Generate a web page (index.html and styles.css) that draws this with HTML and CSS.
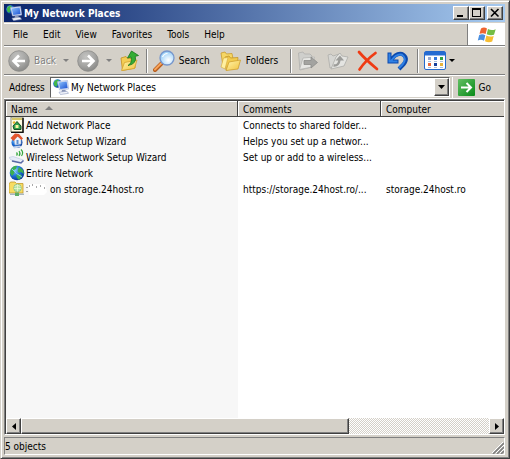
FILE: index.html
```html
<!DOCTYPE html>
<html lang="en">
<head>
<meta charset="utf-8">
<title>My Network Places</title>
<link rel="stylesheet" href="styles.css">
</head>
<body>
<svg class="defs" aria-hidden="true">
  <defs>
    <radialGradient id="disc" cx=".4" cy=".3" r=".75"><stop offset="0" stop-color="#c4c4c2"/><stop offset=".6" stop-color="#a4a4a2"/><stop offset="1" stop-color="#858583"/></radialGradient>
    <radialGradient id="globe" cx=".35" cy=".3" r=".8"><stop offset="0" stop-color="#8fd0ff"/><stop offset=".5" stop-color="#1c6fd8"/><stop offset="1" stop-color="#062c86"/></radialGradient>
    <linearGradient id="folder" x1="0" y1="0" x2="1" y2="1"><stop offset="0" stop-color="#fff6b0"/><stop offset="1" stop-color="#f2c23c"/></linearGradient>
    <linearGradient id="screen" x1="0" y1="0" x2="1" y2="1"><stop offset="0" stop-color="#8fc4ff"/><stop offset="1" stop-color="#1a4fd0"/></linearGradient>
    <radialGradient id="lens" cx=".6" cy=".65" r=".7"><stop offset="0" stop-color="#ffffff"/><stop offset="1" stop-color="#8ccaf8"/></radialGradient>
    <linearGradient id="green" x1="0" y1="0" x2="1" y2="1"><stop offset="0" stop-color="#63bf63"/><stop offset="1" stop-color="#078a18"/></linearGradient>
  </defs>
  <symbol id="network" viewBox="0 0 16 16">
    <circle cx="4.5" cy="4.5" r="4.3" fill="url(#globe)"/>
    <path d="M1 3Q2 .6 5 .5L6 2 4 4 4.500 6 3 8 1 6Z" fill="#43b649"/>
    <path d="M4.500 2.500 14.500 1.500 15.700 10 6.500 11Z" fill="#dfe7f8" stroke="#a3b0d6" stroke-width=".6"/>
    <path d="M5.600 3.500 13.600 2.600 14.600 9 7.300 9.900Z" fill="url(#screen)"/>
    <path d="M9 11H12.500L13 13H8.500Z" fill="#8a96b5"/>
    <path d="M6 13.200 14 12.300 15.500 14.300 7.500 15.500Z" fill="#f2f5fb" stroke="#8f9bc0" stroke-width=".6"/>
  </symbol>
</svg>
<div class="window">
  <header class="titlebar">
    <svg class="icon16"><use href="#network"/></svg>
    <h1>My Network Places</h1>
    <button class="caption" aria-label="Minimize"><svg viewBox="0 0 12 10"><path d="M2 7H8V9H2Z"/></svg></button>
    <button class="caption" aria-label="Maximize"><svg viewBox="0 0 12 10"><path fill-rule="evenodd" d="M1 0H10V9H1ZM2 2V8H9V2Z"/></svg></button>
    <button class="caption close" aria-label="Close"><svg viewBox="0 0 12 10"><path d="M2 1 9.500 8.500M9.500 1 2 8.500" stroke="#000" stroke-width="1.600"/></svg></button>
  </header>

  <div class="menurow">
    <nav class="menu">
      <button>File</button><button>Edit</button><button>View</button><button>Favorites</button><button>Tools</button><button>Help</button>
    </nav>
    <div class="flag">
      <svg viewBox="0 0 20 18">
        <path d="M4 2.500Q7 .5 10 2.500L8.600 8Q6 6.400 2.500 7.800Z" fill="#ee6430"/>
        <path d="M11 3Q14.500 5 18.700 3.200L17 8.800Q13.500 10 9.700 8.300Z" fill="#74bd45"/>
        <path d="M2.200 9Q5.500 7.500 8.300 9.200L7 14.700Q4 13 .8 14.400Z" fill="#4a8fe0"/>
        <path d="M9.400 9.600Q12.800 11.300 16.700 9.900L15.200 15.600Q11.500 17 8 15.200Z" fill="#f7bd32"/>
      </svg>
    </div>
  </div>

  <div class="toolbar">
    <button class="tool off" disabled><svg class="icon22" viewBox="0 0 22 22"><circle cx="11" cy="11" r="10.300" fill="url(#disc)" stroke="#8b8b89" stroke-width=".8"/><path d="M17 11H6M11 5.500 5.500 11 11 16.500" fill="none" stroke="#fff" stroke-width="2.600"/></svg><span>Back</span></button>
    <button class="drop off" disabled aria-label="Back history"></button>
    <button class="tool off" disabled aria-label="Forward"><svg class="icon22" viewBox="0 0 22 22"><circle cx="11" cy="11" r="10.300" fill="url(#disc)" stroke="#8b8b89" stroke-width=".8"/><path d="M5 11H16M11 5.500 16.500 11 11 16.500" fill="none" stroke="#fff" stroke-width="2.600"/></svg></button>
    <button class="drop off" disabled aria-label="Forward history"></button>
    <button class="tool last" aria-label="Up"><svg class="icon22" viewBox="0 0 22 22"><path d="M1 8 6 6.500 7.500 8.500 15 8V18L2.500 20.500Z" fill="#f3cd55" stroke="#c3911f" stroke-width=".8"/><path d="M1.500 20.500 4.500 12.500 17 10 14.500 18.500Z" fill="url(#folder)" stroke="#d3a22d" stroke-width=".8"/><path d="M8 15.500Q12.500 13 11 7L7.500 8 11.500 1 18.500 5.500 15.300 6.300Q17 14 8 15.500Z" fill="#33ad35" stroke="#16761c" stroke-width=".8"/></svg></button>
    <i class="sep"></i>
    <button class="tool"><svg class="icon22" viewBox="0 0 22 22"><path d="M2 20 8.500 13.500" stroke="#b65b1c" stroke-width="4" stroke-linecap="round"/><path d="M2 19.500 8 13.500" stroke="#f7a45a" stroke-width="2" stroke-linecap="round"/><circle cx="14" cy="8" r="7" fill="url(#lens)" stroke="#7796cb" stroke-width="1.300"/><path d="M9.500 7Q11 3.500 14.500 3.500" fill="none" stroke="#fff" stroke-width="1.200"/></svg><span>Search</span></button>
    <button class="tool folders"><svg class="icon22" viewBox="0 0 22 22"><path d="M1 3 5 2 6.500 4 12 3.500 14 14 3 16Z" fill="#f6d765" stroke="#c99c2d" stroke-width=".8"/><path d="M5 7 9 6 10.500 8 18 7.500 17 18 6 20Z" fill="#f2cb4d" stroke="#c3952a" stroke-width=".8"/><path d="M1 17 3.500 8 8 7.500 5 19Z" fill="#fff0a0" stroke="#d3a63a" stroke-width=".6"/><path d="M6 20.500 9 12 20.500 10 18 19Z" fill="url(#folder)" stroke="#cf9f2f" stroke-width=".8"/></svg><span>Folders</span></button>
    <i class="sep"></i>
    <button class="tool off" disabled aria-label="Move to"><svg class="icon22" viewBox="0 0 22 22"><path d="M1.500 3 6 2 7.500 4H13L15 6V17L3 20Z" fill="#cfcfcc" stroke="#b0b0ad" stroke-width=".8"/><path d="M2.500 19.500 6 8 17.500 7 15 17Z" fill="#e6e6e3" stroke="#b5b5b2" stroke-width=".8"/><path d="M7 10.500H14V7L20.500 12.500 14 18V14.500H7Z" fill="#a3a3a0" stroke="#8c8c89" stroke-width=".8"/></svg></button>
    <button class="tool off" disabled aria-label="Copy to"><svg class="icon22" viewBox="0 0 22 22"><path d="M1 5 4 4 6 6 12 4V15L3 18Z" fill="#d6d6d3" stroke="#adadaa" stroke-width=".8"/><path d="M4 19 9 7 13 3 15 6 21 7 17 16Z" fill="#e4e4e1" stroke="#adadaa" stroke-width=".8"/><path d="M6.500 15.500Q12 16 12.500 9.500" fill="none" stroke="#9c9c99" stroke-width="2.400"/><path d="M8.500 10.500 13 5.500 17 10.500Z" fill="#9c9c99"/></svg></button>
    <button class="tool" aria-label="Delete"><svg class="icon22" viewBox="0 0 22 22"><path d="M2 2Q8 9 20 19M18.500 3Q9 10 2.500 19.500" fill="none" stroke="#ef3b13" stroke-width="2.700" stroke-linecap="round"/></svg></button>
    <button class="tool" aria-label="Undo"><svg class="icon22" viewBox="0 0 22 22"><path d="M2.500 2.500V11.500H11.500M3.500 11Q9 2.500 15 4Q22 8 16.500 14.500L12 19" fill="none" stroke="#0c49ad" stroke-width="4"/><path d="M2.500 3.500V11.500H10.500M4 11Q9.500 3 15 4.700Q20.500 8.500 15.500 14.500L12 18" fill="none" stroke="#2f80e4" stroke-width="2"/></svg></button>
    <i class="sep"></i>
    <button class="tool" aria-label="Views"><svg class="icon22" viewBox="0 0 22 20"><rect x=".5" y=".5" width="21" height="18" rx="1.500" fill="#fff" stroke="#2469cd"/><path d="M1 1H21V4.500H1Z" fill="#246bd2"/><path d="M4 6H7V9H4Z" fill="#98a8ce"/><path d="M10 6H13V9H10Z" fill="#3478dd"/><path d="M16 6H19V9H16Z" fill="#31a344"/><path d="M4 12H7V15H4Z" fill="#e9683b"/><path d="M10 12H13V15H10Z" fill="#17409c"/><path d="M16 12H19V15H16Z" fill="#e8b33b"/><path d="M4 10.500H7M10 10.500H13M16 10.500H19M4 16.500H7M10 16.500H13M16 16.500H19" stroke="#aac0dd"/></svg></button>
    <button class="drop" aria-label="View options"></button>
  </div>

  <div class="addressrow">
    <label for="address">Address</label>
    <div class="combo">
      <svg class="icon16"><use href="#network"/></svg>
      <input id="address" type="text" value="My Network Places">
      <button class="raised" aria-label="Show addresses"><svg width="7" height="4" viewBox="0 0 7 4"><path d="M0 0H7L3.500 4Z"/></svg></button>
    </div>
    <button class="go"><svg viewBox="0 0 17 17"><rect width="17" height="17" rx="1" fill="url(#green)"/><path d="M3 8.500H13M8.500 4 13 8.500 8.500 13" fill="none" stroke="#fff" stroke-width="2"/></svg><span>Go</span></button>
  </div>

  <main class="list">
    <table>
      <colgroup><col class="c-name"><col class="c-comments"><col></colgroup>
      <thead>
        <tr><th>Name <svg class="sort" viewBox="0 0 8 4"><path d="M4 0 8 4H0Z"/></svg></th><th>Comments</th><th>Computer</th></tr>
      </thead>
      <tbody>
        <tr><td><div class="item"><svg class="icon16" viewBox="0 0 16 16"><path d="M2 0H14V15H2Z" fill="#fffce4" stroke="#8a8a70"/><path d="M3 1H13V3H3Z" fill="#d7c669"/><path d="M14 1V15.500H2" fill="none" stroke="#111" stroke-width="1.500"/><path d="M4 9 8 4.500 12 9V12.500H5Z" fill="#31a24a" stroke="#174e27"/><path d="M6.500 8H9.500V11H6.500Z" fill="#fff3a0"/><path d="M4 6 6 5" stroke="#e7b52a" stroke-width="2"/></svg>Add Network Place</div></td><td>Connects to shared folder...</td><td></td></tr>
        <tr><td><div class="item"><svg class="icon16" viewBox="0 0 16 16"><circle cx="8" cy="9.500" r="5.500" fill="url(#globe)"/><path d="M5 6 9 3 12 6V11L6 12Z" fill="#edf2fa" stroke="#9caed0" stroke-width=".6"/><path d="M1.500 5 6 .5 10 1 14 5.500 12.500 7 8.500 3.500 4.500 8Z" fill="#e2562e"/><path d="M7.500 7H9.500V11H7.500Z" fill="#5c8fd0"/><path d="M4 13.500 11 12.500 13 14 5 15.500Z" fill="#c6d4ed"/></svg>Network Setup Wizard</div></td><td>Helps you set up a networ...</td><td></td></tr>
        <tr><td><div class="item"><svg class="icon16" viewBox="0 0 16 16"><path d="M7.500 3.500Q9 5 7.500 6.500M10 2Q12 4.500 10 7M12 .5Q15 3.500 12.500 7" fill="none" stroke="#35a63c" stroke-width="1.200"/><path d="M0 8.500 4 7.500 14.500 11 12 13.500 2 11Z" fill="#e7ecf8" stroke="#b9c2dc" stroke-width=".6"/><path d="M3 12 12 14 14.500 11.500" fill="none" stroke="#5968a5" stroke-width="1.500"/></svg>Wireless Network Setup Wizard</div></td><td>Set up or add to a wireless...</td><td></td></tr>
        <tr><td><div class="item"><svg class="icon16" viewBox="0 0 16 16"><circle cx="8" cy="8" r="7.300" fill="url(#globe)"/><path d="M2 4Q5 0 8 1L7 4 5 5 5.500 8 3 11 1 8ZM10 2 14 5 15 9 12 7 10 8 8.500 6ZM7 10 11 9 13 11 10 15 8 13Z" fill="#3daf51"/><path d="M3 4Q7 9 13 12" stroke="#83cafa" fill="none"/></svg>Entire Network</div></td><td></td><td></td></tr>
        <tr><td><div class="item"><svg class="icon16" viewBox="0 0 16 16"><path d="M0 3 1.500 1H6L7.500 2.500H14V12H0Z" fill="#f8dc62" stroke="#c39a2b" stroke-width=".8"/><circle cx="8.500" cy="7" r="3.800" fill="#b5e3a5" stroke="#79b58a" stroke-width=".6"/><path d="M5.500 5.500Q8.500 3 11.500 5.500M5 7.500H12M8.500 3.500V10.500" fill="none" stroke="#f2fbd9" stroke-width=".7"/><path d="M1 12.500H15V14H1Z" fill="#a8b6bd"/><path d="M6 11.500H10V15H6Z" fill="#5cad64"/></svg><svg class="smudge" viewBox="0 0 23 12"><path d="M2 1H19L21 9 18 12H3Z" fill="#fff"/><path d="M1 4V5M1 8V9M3 3H4M6 2H7M10 4H11M14 3H15M18 5H19" stroke="#555"/></svg>on storage.24host.ro</div></td><td>https://storage.24host.ro/...</td><td>storage.24host.ro</td></tr>
        <tr class="rest"><td></td><td></td><td></td></tr>
      </tbody>
    </table>
    <div class="scrollbar">
      <button class="raised" aria-label="Scroll left"><svg width="4" height="7" viewBox="0 0 4 7"><path d="M4 0V7L0 3.500Z"/></svg></button>
      <div class="track"><div class="thumb raised"></div></div>
      <button class="raised" aria-label="Scroll right"><svg width="4" height="7" viewBox="0 0 4 7"><path d="M0 0V7L4 3.500Z"/></svg></button>
    </div>
  </main>

  <footer class="status">
    <span>5 objects</span>
    <svg viewBox="0 0 12 12"><path d="M1 12 12 1M5 12 12 5M9 12 12 9" stroke="#808080" stroke-width="1.600"/><path d="M0 11 11 0M4 11 12 3M8 11 12 7" stroke="#fff"/></svg>
  </footer>
</div>
</body>
</html>
```
FILE: styles.css
```css
* { box-sizing: border-box; }
html, body { height: 100%; }
body {
  margin: 0;
  background: #d4d0c8;
  color: #000;
  font: 10px/13px Tahoma, "DejaVu Sans Condensed", "Noto Sans", sans-serif;
}
svg { display: block; flex: none; }
button, input { font: inherit; color: inherit; margin: 0; padding: 0; border: 0; background: none; }
.defs { position: absolute; width: 0; height: 0; }
.icon16 { width: 16px; height: 16px; }
.icon22 { width: 22px; height: 22px; }

.window {
  height: 100vh;
  display: flex;
  flex-direction: column;
  padding: 3px 4px 3px 3px;
  border: 1px solid;
  border-color: #d4d0c8 #404040 #404040 #d4d0c8;
  box-shadow: inset 1px 1px #fff, inset -1px -1px #808080;
}

.titlebar {
  display: flex;
  align-items: center;
  height: 18px;
  padding: 0 2px;
  background: linear-gradient(90deg, #0a246a, #a6caf0);
  color: #fff;
}
.titlebar h1 { flex: 1; margin: 0 0 0 2px; font-size: 10px; font-weight: bold; }
.raised, .caption {
  display: flex;
  align-items: center;
  justify-content: center;
  background: #d4d0c8;
  border: 1px solid;
  border-color: #fff #404040 #404040 #fff;
  box-shadow: inset -1px -1px #808080;
}
.caption { width: 16px; height: 14px; }
.caption svg { width: 12px; height: 10px; }
.close { margin-left: 2px; }

.menurow { display: flex; height: 23px; margin-top: 1px; border-top: 1px solid #fff; border-bottom: 1px solid #808080; }
.menu { flex: 1; display: flex; align-items: center; padding-left: 2px; }
.menu button { padding: 0 8px 0 7px; }
.flag { display: flex; align-items: center; justify-content: center; width: 38px; border-left: 1px solid #808080; background: #fff; }
.flag svg { width: 20px; height: 18px; }

.toolbar { display: flex; align-items: center; height: 29px; padding-left: 4px; border-top: 1px solid #fff; border-bottom: 1px solid #808080; }
.tool { display: flex; align-items: center; gap: 4px; margin-right: 8px; }
.tool:has(+ .drop) { margin-right: 0; }
.tool.last { margin-right: 4px; }
.tool.folders { margin: 0 12px 0 2px; }
.off { color: #808080; text-shadow: 1px 1px #fff; }
.drop { width: 21px; height: 22px; display: flex; align-items: center; justify-content: center; }
.drop::before { content: ""; border: 3px solid transparent; border-top-color: currentColor; border-bottom: 0; }
.drop:last-child { width: 12px; }
.sep { width: 2px; height: 24px; margin-right: 5px; border-left: 1px solid #808080; border-right: 1px solid #fff; }

.addressrow { display: flex; align-items: center; height: 24px; padding-left: 5px; border-top: 1px solid #fff; border-bottom: 1px solid #fff; }
.addressrow label { width: 41px; }
.combo { flex: 1; display: flex; align-items: center; height: 21px; padding: 0 0 0 2px; background: #fff; border: 1px solid; border-color: #606060 #fff #d4d0c8 #606060; }
.combo input { flex: 1; min-width: 0; padding-left: 2px; outline: 0; }
.combo .raised { width: 15px; height: 18px; }
.go { display: flex; align-items: center; gap: 4px; height: 21px; margin-left: 2px; padding: 0 14px 0 5px; border-left: 1px solid #fff; }
.go svg { width: 17px; height: 17px; }

.list { flex: 1; min-height: 0; display: flex; flex-direction: column; border: 1px solid; border-color: #808080 #fff #fff #808080; box-shadow: inset 1px 1px #404040; padding: 1px 0 0 1px; background: #fff; }
table { flex: 1; width: 100%; border-collapse: collapse; table-layout: fixed; }
.c-name { width: 232px; }
.c-comments { width: 143px; }
th { height: 16px; padding: 0 5px; text-align: left; font-weight: normal; background: #d4d0c8; box-shadow: inset -1px -1px #404040, inset 1px 1px #fff; }
th:last-child { box-shadow: inset 0 -1px #404040, inset 1px 1px #fff; }
.sort { display: inline-block; width: 8px; height: 4px; margin: 0 0 3px 5px; fill: #808080; }
td { height: 16px; padding: 0 5px; white-space: nowrap; overflow: hidden; }
td:first-child { padding: 0 3px; background: #f7f7f7; }
.item { display: flex; align-items: center; height: 16px; gap: 1px; }
.smudge { width: 23px; height: 12px; }
.rest td { height: auto; }

.scrollbar { display: flex; height: 16px; }
.scrollbar button { width: 15px; }
.track { flex: 1; background: repeating-conic-gradient(#fff 0 25%, #d4d0c8 0 50%) 0 0 / 2px 2px; }
.thumb { width: 70%; height: 16px; }

.status { display: flex; align-items: center; justify-content: space-between; height: 18px; margin-top: 2px; border: 1px solid; border-color: #808080 #fff #fff #808080; }
.status svg { width: 12px; height: 12px; align-self: flex-end; }
```
